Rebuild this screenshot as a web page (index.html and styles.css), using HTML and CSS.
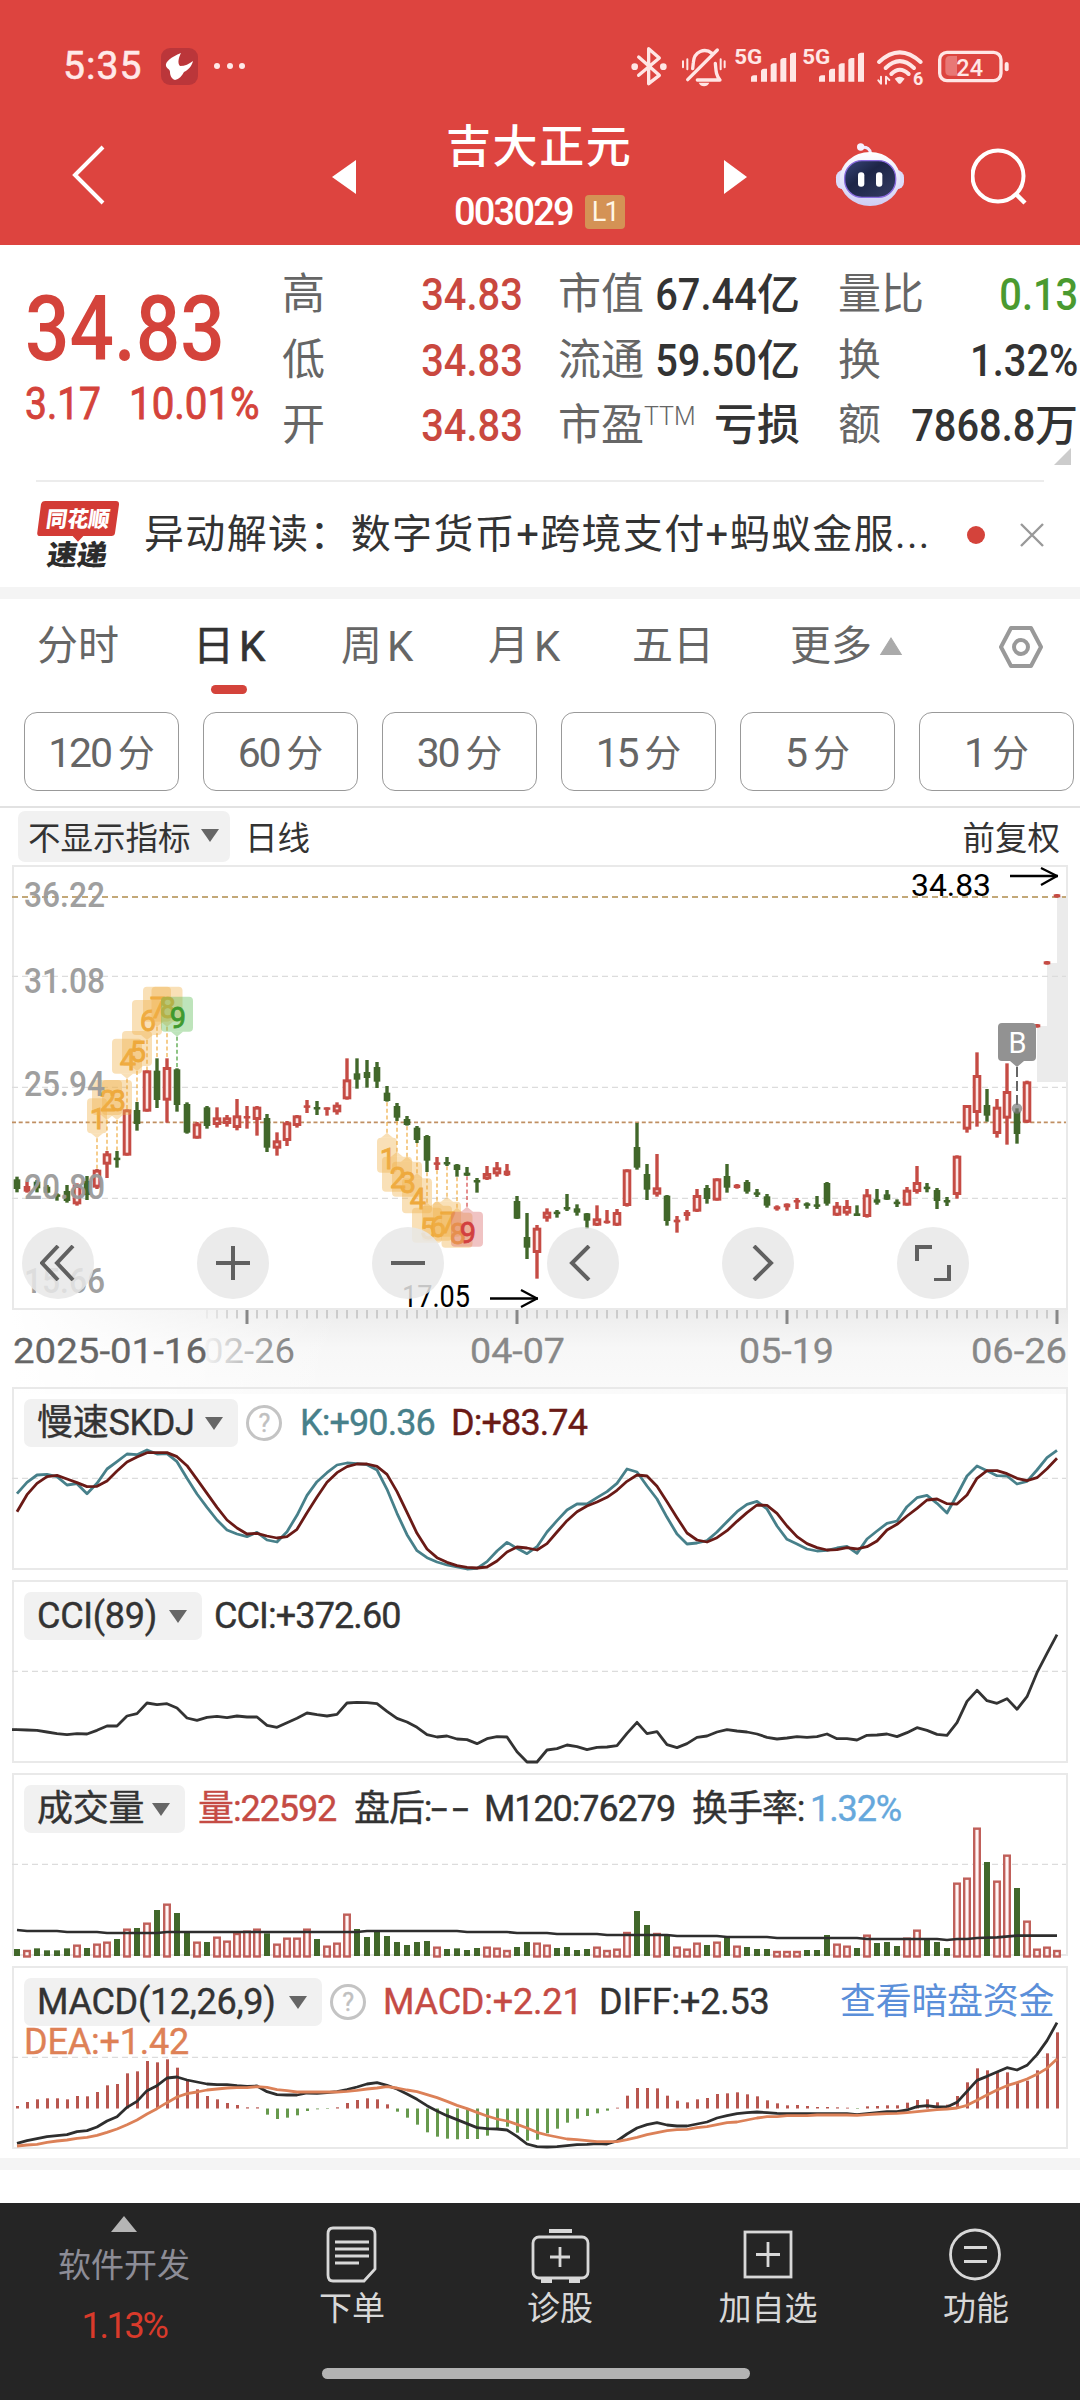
FILE: index.html
```html
<!DOCTYPE html>
<html lang="zh-CN">
<head>
<meta charset="utf-8">
<title>吉大正元 003029</title>
<link rel="stylesheet" href="styles.css">
</head>
<body>
<header class="top">
  <div class="status">
    <span class="clock">5:35</span>
    <svg class="app-icon" viewBox="0 0 37 37"><rect width="37" height="37" rx="9" fill="#bb363a"/><path d="M20 5 C10 9 4 14 5 18 C6 21 9 21 9 24 C9 28 11 31 14 32 C18 31 21 28 23 24 C27 22 31 18 32 13 C28 16 24 18 19 18 C16 15 18 9 20 5Z" fill="#fff"/></svg>
    <svg class="dots" viewBox="0 0 34 8"><g fill="#ffe9e8"><circle cx="4" cy="4" r="3"/><circle cx="17" cy="4" r="3"/><circle cx="29" cy="4" r="3"/></g></svg>
    <svg class="sys" viewBox="0 0 1260 180" fill="none" stroke="#ffe6e5" stroke-width="10" stroke-linecap="round" stroke-linejoin="round">
      <path d="M56 63 L118 118 L86 143 V38 L118 66 L56 118"/>
      <g fill="#ffe6e5" stroke="none"><circle cx="44" cy="92" r="10"/><circle cx="130" cy="92" r="10"/></g>
      <path d="M232 132 H300 C288 118 288 105 286 82 M276 52 C255 35 222 45 220 80 L218 98 M292 42 L203 131"/>
      <path d="M189 76 V94 M202 70 V100 M302 70 V100 M314 76 V94" stroke-width="6"/>
      <path d="M236 140 H268 C262 154 242 154 236 140Z" fill="#ffe6e5" stroke="none"/>
      <g fill="#ffe6e5" stroke="none">
        <text x="343" y="84" class="net" textLength="84" lengthAdjust="spacingAndGlyphs">5G</text>
        <text x="547" y="84" class="net" textLength="84" lengthAdjust="spacingAndGlyphs">5G</text>
        <path id="bars" d="M393 137 V126 Q393 118 402 118 H411 V137Z M423 137 V104 Q425 98 432 98 H441 V137Z M452 137 V87 Q455 82 461 82 H470 V137Z M481 137 V71 Q484 66 490 66 H499 V137Z M510 137 V55 Q513 50 519 50 H528 V137Z"/>
        <use href="#bars" x="204"/>
        <path d="M824 128 Q839 116 854 128 L843 142 Q839 145 835 142Z"/>
        <text x="879" y="148" class="six">6</text>
        <text x="1009" y="120" class="batt" textLength="80" lengthAdjust="spacingAndGlyphs">24</text>
      </g>
      <path d="M777 78 Q839 20 902 78 M797 96 Q839 55 882 96 M814 114 Q839 88 866 114" stroke-width="12"/>
      <path d="M783 122 V143 L775 133 M798 143 V122 L808 132" stroke-width="6"/>
      <rect x="959" y="49" width="184" height="85" rx="22"/>
      <path d="M976 75 Q976 60 990 60 H1011 V119 H990 Q976 119 976 105Z" fill="#e87876" stroke="none"/>
      <path d="M1160 84 V100" stroke-width="12"/>
    </svg>
  </div>
  <div class="nav">
    <svg class="back" viewBox="0 0 34 60"><path d="M31 2 L3 30 L31 58" fill="none" stroke="#fff" stroke-width="4"/></svg>
    <svg class="tri-l" viewBox="0 0 24 34"><path d="M24 0 V34 L0 17Z" fill="#fff"/></svg>
    <div class="title"><h1>吉大正元</h1><div class="code"><span>003029</span><i>L1</i></div></div>
    <svg class="tri-r" viewBox="0 0 24 34"><path d="M0 0 V34 L23 17Z" fill="#fff"/></svg>
    <svg class="robot" viewBox="645 320 210 200">
      <defs><linearGradient id="shell" x1="0" y1="0" x2="0" y2="1"><stop offset="0" stop-color="#fff"/><stop offset="1" stop-color="#cfcdf4"/></linearGradient>
      <linearGradient id="visor" x1="0" y1="0" x2="1" y2="1"><stop offset="0" stop-color="#39477a"/><stop offset=".4" stop-color="#1d2547"/><stop offset="1" stop-color="#343c63"/></linearGradient></defs>
      <path d="M724 339 Q750 336 752 358" fill="none" stroke="#efeaff" stroke-width="9"/><circle cx="722" cy="338" r="11" fill="#f7f1ff"/>
      <rect x="648" y="407" width="204" height="58" rx="22" fill="#dcdcfa"/>
      <ellipse cx="750" cy="434" rx="91" ry="81" fill="url(#shell)"/>
      <rect x="674" y="379" width="153" height="110" rx="52" fill="url(#visor)" stroke="#8769dd" stroke-width="4"/>
      <rect x="714" y="414" width="19" height="43" rx="9" fill="#fff"/><rect x="768" y="414" width="19" height="43" rx="9" fill="#fff"/>
    </svg>
    <svg class="search" viewBox="0 0 58 58"><circle cx="27" cy="28" r="25.5" fill="none" stroke="#fff" stroke-width="4"/><path d="M45 46 L54 55" stroke="#fff" stroke-width="4.5"/></svg>
  </div>
</header>

<section class="quote">
  <div class="price">
    <div class="last"><b>34.83</b></div>
    <div class="chg"><span>3.17</span><span>10.01%</span></div>
  </div>
  <dl class="q1">
    <dt>高</dt><dd><b>34.83</b></dd><dt>低</dt><dd><b>34.83</b></dd><dt>开</dt><dd><b>34.83</b></dd>
  </dl>
  <dl class="q2">
    <dt>市值</dt><dd><b>67.44</b>亿</dd><dt>流通</dt><dd><b>59.50</b>亿</dd><dt>市盈<sup>TTM</sup></dt><dd>亏损</dd>
  </dl>
  <dl class="q3">
    <dt>量比</dt><dd class="green"><b>0.13</b></dd><dt>换</dt><dd><b>1.32%</b></dd><dt>额</dt><dd><b>7868.8</b>万</dd>
  </dl>
  <i class="corner"></i>
</section>

<section class="news">
  <svg class="logo" viewBox="78 50 252 212">
    <path d="M106 56 H318 Q328 56 327 67 L315 152 Q314 161 304 161 H220 L204 178 L188 161 H90 Q80 161 82 150 L93 66 Q95 56 106 56Z" fill="#d33b35"/>
    <text transform="translate(106 135) skewX(-8)" class="lg1" textLength="190" lengthAdjust="spacingAndGlyphs">同花顺</text>
    <text transform="translate(108 248) skewX(-8)" class="lg2" textLength="180" lengthAdjust="spacingAndGlyphs">速递</text>
  </svg>
  <p>异动解读：数字货币+跨境支付+蚂蚁金服...</p>
  <i class="dot"></i>
  <svg class="close" viewBox="0 0 24 24"><path d="M1 1 L23 23 M23 1 L1 23" stroke="#999" stroke-width="2.4"/></svg>
</section>

<nav class="tabs">
  <span>分时</span><span class="on">日<em>K</em></span><span>周<em>K</em></span><span>月<em>K</em></span><span>五日</span><span>更多<svg viewBox="0 0 22 17"><path d="M11 1 L21 17 H1Z" fill="#aaa" stroke="#aaa"/></svg></span>
  <svg class="hex" viewBox="0 0 46 44"><path d="M13 3 H33 L43 22 L33 41 H13 L3 22Z" fill="none" stroke="#999" stroke-width="4" stroke-linejoin="round"/><circle cx="23" cy="22" r="7" fill="none" stroke="#999" stroke-width="4"/></svg>
</nav>
<div class="mins"><button><em>120</em>分</button><button><em>60</em>分</button><button><em>30</em>分</button><button><em>15</em>分</button><button><em>5</em>分</button><button><em>1</em>分</button></div>

<div class="bar"><span class="pick">不显示指标<i></i></span><span class="line">日线</span><span class="adj">前复权</span></div>

<main class="charts">
  <div class="kline">
    <svg id="k" viewBox="12 865 1056 446"></svg>
    <div class="tools">
      <button><svg viewBox="0 0 36 36"><path d="M18 1 L2 18 L18 35 M33 1 L17 18 L33 35"/></svg></button>
      <button><svg viewBox="0 0 36 36"><path d="M18 1 V35 M1 18 H35"/></svg></button>
      <button><svg viewBox="0 0 36 36"><path d="M1 18 H35"/></svg></button>
      <button><svg viewBox="0 0 36 36"><path d="M24 1 L7 18 L24 35"/></svg></button>
      <button><svg viewBox="0 0 36 36"><path d="M14 1 L31 18 L14 35"/></svg></button>
      <button><svg viewBox="0 0 36 36"><path d="M2 16 V2 H17 M34 20 V35 H19"/></svg></button>
    </div>
  </div>
  <svg id="axis" viewBox="12 1310 1056 84"></svg>
  <div class="panel skdj">
    <svg id="skdj" viewBox="12 1388 1056 182"></svg>
    <div class="head"><span class="pick">慢速SKDJ<i></i></span><span class="help">?</span><span class="teal">K:+90.36</span><span class="maroon">D:+83.74</span></div>
  </div>
  <div class="panel cci">
    <svg id="cci" viewBox="12 1581 1056 182"></svg>
    <div class="head"><span class="pick">CCI(89)<i></i></span><span>CCI:+372.60</span></div>
  </div>
  <div class="panel vol">
    <svg id="vol" viewBox="12 1774 1056 182"></svg>
    <div class="head"><span class="pick">成交量<i></i></span><span class="red">量:22592</span><span>盘后:<tt>--</tt></span><span>M120:76279</span><span>换手率:</span><span class="blue">1.32%</span></div>
  </div>
  <div class="panel macd">
    <svg id="macd" viewBox="12 1967 1056 182"></svg>
    <div class="head"><span class="pick">MACD(12,26,9)<i></i></span><span class="help">?</span><span class="red">MACD:+2.21</span><span>DIFF:+2.53</span><a>查看暗盘资金</a><span class="dea">DEA:+1.42</span></div>
  </div>
</main>
<div class="band"></div>

<footer>
  <div class="acts">
    <div class="sector"><i></i><span>软件开发</span><b>1.13%</b></div>
    <div><svg viewBox="0 0 60 60"><path d="M11 4 H47 Q53 4 53 10 V45 L42 57 H11 Q6 57 6 51 V10 Q6 4 11 4Z"/><path d="M13 18 H47 M13 25 H47 M13 32 H47 M13 39 H37"/></svg><span>下单</span></div>
    <div><svg viewBox="0 0 60 60"><rect x="3" y="13" width="55" height="41" rx="6"/><path d="M19 7 H42 M11 57 H22 M39 57 H50" stroke-width="4"/><path d="M30 23 V43 M20 33 H40"/></svg><span>诊股</span></div>
    <div><svg viewBox="0 0 60 60"><rect x="7" y="8" width="46" height="45"/><path d="M30 18 V43 M18 30.500 H42"/></svg><span>加自选</span></div>
    <div><svg viewBox="0 0 60 60"><circle cx="29" cy="30.500" r="24.500"/><path d="M18 23.500 H41 M18 37.500 H41"/></svg><span>功能</span></div>
  </div>
  <div class="home"></div>
</footer>
<script src="charts.js"></script>
</body>
</html>
```
FILE: styles.css
```css
* { box-sizing: border-box; margin: 0; padding: 0; }
body { width: 1080px; height: 2400px; overflow: hidden; background: #fff; color: #333; font-family: Roboto, "Noto Sans CJK SC", sans-serif; }
svg { display: block; flex: none; }
i, em { font-style: normal; }
button { background: none; border: 0; font: inherit; color: inherit; }

.top { height: 245px; background: #dd443f; color: #fff; }
.status { display: flex; align-items: center; height: 96px; padding: 36px 40px 0 63px; }
.clock { width: 98px; font-size: 39px; font-weight: 400; -webkit-text-stroke: .6px #ffe9e8; color: #ffe9e8; letter-spacing: 1.100px; }
.app-icon { width: 37px; height: 37px; }
.dots { width: 34px; height: 8px; margin: 0 0 0 15px; }
.sys { width: 420px; height: 60px; margin-left: auto; }
.net { font: 700 62px Roboto, sans-serif; }
.six { font: 700 54px Roboto, sans-serif; }
.batt { font: 500 74px Roboto, sans-serif; }
.nav { display: flex; align-items: flex-start; height: 149px; }
.back { width: 34px; height: 60px; margin: 49px 0 0 72px; }
.tri-l { width: 24px; height: 34px; margin: 64px 0 0 226px; }
.title { width: 220px; margin: 22px 0 0 76px; }
.title h1 { font-size: 45px; font-weight: 500; line-height: 60px; letter-spacing: 1.600px; text-indent: 14px; white-space: nowrap; }
.code { display: flex; align-items: center; margin: 15px 0 0 22px; font-size: 38px; line-height: 38px; letter-spacing: -1.800px; font-weight: 500; }
.code i { width: 40px; height: 34px; margin-left: 12px; border-radius: 4px; background: #d49255; font-size: 27px; line-height: 34px; text-align: center; font-weight: 400; color: #fff6e6; }
.tri-r { width: 24px; height: 34px; margin: 64px 0 0 72px; }
.robot { width: 70px; height: 66.700px; margin: 45px 0 0 87px; }
.search { width: 58px; height: 58px; margin: 52px 0 0 66px; }

.quote { position: relative; display: flex; height: 235px; }
.price { width: 282px; padding: 35px 0 0 25px; color: #d4433b; }
.last { height: 100px; font-size: 90px; line-height: 100px; }
.last b, .chg span, dd b { display: inline-block; transform: scaleX(.885); transform-origin: left; font-weight: 500; }
.last b { transform: scaleX(.87); }
.chg { display: flex; gap: 19px; margin-top: 1px; font-size: 44px; line-height: 44px; padding-top: 1px; }
.chg span { font-weight: 400; -webkit-text-stroke: .9px #d4433b; }
.chg span:first-child { width: 85px; }
.chg span:last-child { transform: scaleX(.915); }
dl { display: grid; grid-template-columns: auto auto; justify-content: space-between; grid-auto-rows: 65.500px; line-height: 65px; padding-top: 17px; font-size: 43px; height: 222px; white-space: nowrap; }
dt { color: #666; font-weight: 400; }
dd { text-align: right; font-weight: 500; font-size: 43px; }
dd b { margin-left: -20px; transform-origin: right; font-size: 45px; }
.q1 { width: 241px; }
.q1 dd { color: #c9483f; }
.q2 { width: 242px; margin-left: 35px; }
.q3 { width: 240px; margin-left: 38px; }
.q3 dd b { margin-left: -50px; }
dl .green { color: #4a9a30; }
sup { display: inline-block; width: 0; font-size: 25px; line-height: 24px; vertical-align: 15px; font-weight: 300; }
.corner { position: absolute; right: 9px; bottom: 15px; border-bottom: 17px solid #ccc; border-left: 17px solid transparent; }

.news { display: flex; align-items: center; height: 107px; margin: 0 36px; border-top: 2px solid #ececec; }
.logo { width: 84px; height: 70.700px; }
.lg1 { font: 900 66px "Noto Sans CJK SC"; fill: #fff; }
.lg2 { font: 900 84px "Noto Sans CJK SC"; fill: #2c2c2c; }
.news p { width: 801px; margin-left: 24px; font-size: 40px; letter-spacing: 1.350px; line-height: 56px; white-space: nowrap; }
.dot { width: 18px; height: 18px; margin-left: 22px; border-radius: 50%; background: #d4433b; }
.close { width: 24px; height: 24px; margin-left: auto; }

.tabs { display: grid; grid-template-columns: 159px 145px 147px 144px 158px 208px 46px; height: 125px; padding: 0 0 0 37px; border-top: 12px solid #f4f4f4; font-size: 41px; line-height: 95px; color: #666; font-weight: 400; }
.tabs span { position: relative; display: flex; white-space: nowrap; }
.tabs span svg { width: 24px; margin: 38px 0 0 7px; height: 18px; }
.tabs em { margin-left: 5px; font-size: 42px; }
.tabs .on { left: -3px; color: #333; -webkit-text-stroke: .6px #333; }
.tabs .on::after { content: ""; position: absolute; left: 18px; top: 86px; width: 36px; height: 9px; border-radius: 4.500px; background: #d4433b; }
.hex { width: 46px; height: 44px; margin-top: 26px; }
.mins { display: flex; gap: 24px; height: 96px; padding-left: 24px; border-bottom: 2px solid #e2e2e2; }
.mins button { flex: none; width: 155px; height: 79px; padding-bottom: 2px; border: 1.500px solid #999; border-radius: 13px; font-size: 37px; font-weight: 400; color: #666; }
.mins em { margin-right: 7px; font-size: 41px; letter-spacing: -2.200px; }

.bar { display: flex; align-items: center; height: 57px; padding: 0 20px 0 18px; font-size: 32.500px; white-space: nowrap; }
.pick { display: flex; align-items: center; justify-content: space-between; background: #f1f1f1; border-radius: 7px; color: #333; }
.pick i { flex: none; border: 9px solid transparent; border-top: 13px solid #666; border-bottom: 0; }
.bar .pick { width: 212px; height: 51px; padding: 0 11px 2px 10px; }
.line { margin: -2px 0 0 15px; }
.adj { margin: -2px 0 0 auto; }

.charts { padding-left: 12px; }
.kline { position: relative; height: 446px; width: 1056px; }
.tools { position: absolute; left: 10px; top: 362px; display: flex; gap: 103px; }
.tools button { flex: none; width: 72px; height: 72px; padding: 18px; border-radius: 50%; background: rgba(232,232,232,.85); }
.tools svg { width: 36px; height: 36px; fill: none; stroke: #606060; stroke-width: 4; }
.kline, #axis { margin-bottom: -1px; }
#axis { width: 1056px; height: 84px; }
.panel { position: relative; width: 1056px; height: 182px; margin-bottom: 11px; }
.panel.skdj { margin-top: -6px; }
.panel > svg { position: absolute; left: 0; top: 0; width: 1056px; height: 182px; overflow: visible; }
.head { position: relative; display: grid; padding: 11px 12px 0; grid-auto-rows: 48px; line-height: 48px; font-size: 36px; white-space: nowrap; align-items: center; letter-spacing: -.9px; -webkit-text-stroke: .4px; }
.head .pick { height: 48px; padding: 0 15px 0 13px; letter-spacing: -.3px; }
.skdj .head { grid-template-columns: 214px 62px 151px 160px; }
.cci .head { grid-template-columns: 190px 300px; }
.cci .pick { width: 178px; }
.vol .head { grid-template-columns: 174px 156px 130px 208px 118px 120px; letter-spacing: -1.100px; }
.vol .pick { width: 161px; }
.macd .head { grid-template-columns: 298px 61px 216px 241px 220px; letter-spacing: -.2px; }
.help { width: 36px; height: 36px; margin-left: 8px; border: 3px solid #c4c4c4; border-radius: 50%; color: #c0c0c0; font-size: 25px; line-height: 31px; text-align: center; }
.teal { color: #47808a; }
.maroon { color: #6a1a16; }
.red { color: #c54b44; }
.blue { color: #66a8dc; }
tt { display: inline-block; transform: scaleX(1.65); transform-origin: left; font-family: inherit; letter-spacing: 3px; }
.head a { color: #5b8fd9; letter-spacing: -.3px; -webkit-text-stroke: 0; }
.dea { color: #de8156; line-height: 36px; margin: -16px 0 0 0; grid-row: 2; }
.band { height: 12px; margin-top: -2px; background: #f4f4f4; }

footer { height: 197px; margin-top: 33px; background: #252525; color: #d8d8d8; }
.acts { display: grid; grid-template-columns: 248px repeat(4, 208px); height: 165px; font-size: 33px; }
.acts div { display: flex; flex-direction: column; align-items: center; padding-top: 21px; line-height: 40px; }
.acts svg { width: 60px; height: 60px; margin-bottom: 5px; fill: none; stroke: #d8d8d8; stroke-width: 2.800; }
.acts .sector { padding-top: 13px; color: #8d8d97; }
.sector i { border: 13px solid transparent; border-bottom: 16px solid #b5b5b5; border-top: 0; }
.sector span { margin-top: 14px; }
.sector b { margin-top: 20px; font-weight: 400; font-size: 36px; letter-spacing: -2.300px; color: #d93a2b; }
.home { width: 428px; height: 11px; margin-left: 322px; border-radius: 6px; background: #b3b3b3; }

.ylab { font: 500 35px Roboto; fill: #9a9a9a; }
.mark { font: 400 31px Roboto; fill: #000; }
.num { font: 400 29px Roboto; text-anchor: middle; }
.date { font: 400 35px Roboto; fill: #888; stroke: #888; stroke-width: .3; }
```
FILE: charts.js
```js
// Every series has 105 daily slots, 10px apart; heights are stored in thirds of a pixel.
const X = i => 17 + 10 * i;
const RED = '#c54b44', GREEN = '#41672a';
const rect = (x, y, w, h, a) => `<rect x="${x}" y="${y}" width="${w}" height="${h}" ${a}/>`;
const line = (x1, y1, x2, y2, a) => `<path d="M${x1} ${y1}L${x2} ${y2}" fill="none" ${a}/>`;
const grid = (y, c = '#dcdcdc', dash = '6 4', w = 1.2) => line(12, y, 1066, y, `stroke="${c}" stroke-width="${w}" stroke-dasharray="${dash}"`);
const frame = (y, h) => rect(13, y + 1, 1054, h - 2, 'fill="none" stroke="#e9e9e9" stroke-width="2"');
const text = (x, y, s, cls, w, a = '') => `<text x="${x}" y="${y}" class="${cls}" ${w ? `textLength="${w}" lengthAdjust="spacingAndGlyphs"` : ''} ${a}>${s}</text>`;
const nums = s => s.trim().split(/\s+/).map(Number);
const poly = (pts, color, w) => `<path d="M${pts.map(p => p.join(' ')).join('L')}" fill="none" stroke="${color}" stroke-width="${w}" stroke-linejoin="round"/>`;
const curve = (s, base, color, w) => poly(nums(s).map((v, i) => [X(i), base + v / 3]), color, w);
const put = (id, html) => { document.getElementById(id).innerHTML = html; };

// colour, high, low, body top, body bottom
const candles = `g 950 997 958 987;r 965 998 978 995;g 960 997 965 985;g 975 1000 980 998;g 1000 1022 1003 1008;g 975 1028 993 1023;r 970 1037 975 1033;g 948 1020 963 1005;r 927 987 929 983;r 873 954 880 914;g 873 923 893 898;r 748 887 748 887;g 726 812 750 792;r 631 755 631 755;g 595 744 632 720;r 595 788 621 722;g 625 755 628 735;g 727 821 732 818;r 786 836 790 836;g 738 806 742 798;r 742 803 772 795;r 765 800 772 792;r 717 811 766 804;r 738 806 768 773;r 738 827 740 780;g 762 876 774 863;r 817 887 841 866;r 783 858 787 843;r 765 803 766 798;r 720 759 736 742;g 723 765 741 747;r 742 767 742 748;r 727 764 734 757;r 595 719 658 718;g 595 686 640 659;g 600 683 636 654;g 606 684 621 665;g 678 725 698 723;g 729 783 738 773;g 768 797 777 795;g 798 849 803 840;g 825 936 828 902;r 891 930 907 912;g 891 918 906 912;g 912 950 914 930;g 921 948 938 947;g 954 998 960 965;r 918 960 939 958;r 906 950 922 943;r 912 948 932 946;g 1008 1077 1023 1076;g 1059 1197 1131 1163;r 1095 1256 1103 1179;r 1045 1085 1055 1076;g 1050 1073 1055 1060;g 1002 1053 1041 1046;g 1033 1067 1045 1058;g 1059 1107 1060 1082;r 1036 1098 1075 1097;r 1050 1091 1082 1089;r 1047 1098 1056 1097;r 928 1040 928 1038;g 789 929 861 923;g 912 1020 942 989;r 882 1010 982 1004;g 1005 1097 1007 1083;r 1068 1118 1079 1087;r 1050 1082 1056 1068;r 987 1056 1005 1055;g 975 1031 984 1017;r 955 1022 955 1022;g 912 998 948 983;r 972 986 974 984;g 960 1001 966 995;g 987 1011 997 1003;g 1002 1043 1009 1037;r 1036 1052 1039 1048;r 1030 1052 1031 1042;r 1014 1047 1020 1026;g 1027 1046 1030 1036;g 1008 1047 1033 1038;g 966 1037 969 1031;r 1026 1068 1037 1067;r 1020 1067 1038 1061;g 1036 1067 1060 1068;r 987 1073 1003 1071;g 987 1034 1018 1028;g 990 1020 1003 1019;g 1018 1041 1025 1032;r 981 1037 989 1037;r 918 1001 966 996;g 969 997 980 985;g 984 1047 990 1023;g 1011 1038 1020 1027;r 886 1016 887 1005;r 735 818 735 809;r 577 800 645 759;g 687 785 735 767;r 717 833 740 822;r 610 854 693 776;g 745 851 755 822;r 662 789 664 788;r 492 503 493 502;r 303 314 304 313;r 102 113 103 112`
  .split(';').map(s => { const [c, ...v] = s.split(' '); return [c, ...v.map(n => 860 + n / 3)]; });

let k = frame(865, 445) + rect(1037, 1026, 31, 56, 'fill="#ebebeb"') + rect(1047, 963, 21, 63, 'fill="#ebebeb"') + rect(1057, 896, 11, 67, 'fill="#ebebeb"');
k += grid(976.3) + grid(1087.3) + grid(1198.3) + grid(897, '#c3a878', '6 4', 1.8) + grid(1122.3, '#c08f62', '4 2.7', 1.8);
candles.forEach(([c, hi, lo, top, bot], i) => {
  const x = X(i), col = c === 'r' ? RED : GREEN;
  k += line(x, hi, x, lo, `stroke="${col}" stroke-width="3.4"`);
  k += c === 'r' && bot - top > 6
    ? rect(x - 2.8, top + 1.5, 5.6, bot - top - 3, `fill="#fbe6e4" stroke="${col}" stroke-width="3"`)
    : rect(x - 3.3, top, 6.6, Math.max(bot - top, 2.5), `fill="${col}"`);
});

// Numbered streak flags: [slot, digit, box top, points down, width]
const flags = [[8,1,715,1,20],[9,2,660,1,30],[10,3,660,1,30],[11,4,536,1,30],[12,5,513,1,30],[13,6,420,1,30],[14,7,380,1,28],[15,8,380,1,31],[16,9,410,1,32],
  [37,1,833,0,20],[38,2,890,0,30],[39,3,905,0,30],[40,4,955,0,30],[41,5,1043,0,30],[42,6,1037,0,30],[43,7,1025,0,28],[44,8,1058,0,31],[45,9,1055,0,32]];
flags.forEach(([i, d, t, up, w]) => {
  const x = X(i), y = 860 + t / 3, h = 35;
  const c = d < 9 ? ['#eea93c', '#f0b24a'] : up ? ['#3f9a2e', '#5cbb55'] : ['#d2403f', '#d96a6a'];
  const tip = up ? y + h + 5 : y - 5;
  k += rect(x - w / 2, y, w, h, `rx="4" fill="${c[1]}" opacity=".4"`);
  k += `<path d="M${x - 6} ${up ? y + h : y}H${x + 6}L${x} ${tip}Z" fill="${c[1]}" opacity=".4"/>`;
  k += line(x, tip, x, up ? candles[i][1] : candles[i][2], `stroke="${c[0]}" stroke-width="1.8" stroke-dasharray="4 2.6" opacity=".65"`);
  k += text(x + 1, y + 31, d, 'num', 0, `fill="${c[0]}" stroke="${c[0]}" stroke-width=".8"`);
});

k += '<path d="M1002 1023H1032Q1036 1023 1036 1027V1057Q1036 1061 1032 1061H1024L1017 1067L1010 1061H1002Q998 1061 998 1057V1027Q998 1023 1002 1023Z" fill="#929292"/>';
k += text(1017.5, 1053, 'B', 'num', 0, 'fill="#fff"') + line(1017, 1067, 1017, 1107, 'stroke="#666" stroke-width="2" stroke-dasharray="10 4"');
k += '<circle cx="1017" cy="1108.500" r="5.200" fill="#777" opacity=".7"/>';
[['36.22', 907], ['31.08', 993], ['25.94', 1096], ['20.80', 1199], ['15.66', 1293]].forEach(([s, y]) => { k += text(24, y, s, 'ylab', 81, 'opacity=".95"'); });
k += text(911, 896, '34.83', 'mark', 80) + poly([[1010, 876], [1058, 876]], '#000', 2.6) + poly([[1041, 868], [1057, 876], [1041, 885]], '#000', 2.2);
k += text(402, 1306.5, '17.05', 'mark', 68) + poly([[490, 1298.5], [538, 1298.5]], '#000', 2.6) + poly([[521, 1290], [537, 1298.5], [521, 1307]], '#000', 2.2);
put('k', k);

let a = '<defs><linearGradient id="dn" x1="0" y1="0" x2="0" y2="1"><stop offset="0" stop-color="#ececec"/><stop offset=".45" stop-color="#f7f7f7"/><stop offset="1" stop-color="#fafafa"/></linearGradient><linearGradient id="fade"><stop offset="0" stop-color="#fff"/><stop offset="1" stop-color="#fff" stop-opacity="0"/></linearGradient><linearGradient id="txt" gradientUnits="userSpaceOnUse" x1="205" y1="0" x2="285" y2="0"><stop offset="0" stop-color="#f4f4f4"/><stop offset="1" stop-color="#888"/></linearGradient></defs>';
a += rect(12, 1310, 1056, 84, 'fill="url(#dn)"') + rect(12, 1310, 330, 84, 'fill="url(#fade)"');
for (let i = 19; i < 105; i++) {
  const major = (i - 23) % 27 === 0, x = X(i);
  a += line(x, 1310, x, major ? 1324 : 1318.5, `stroke="${major ? '#888' : '#aaa'}" stroke-width="${major ? 3 : 1}" opacity="${i < 22 ? (i - 18) / 4 : 1}"`);
}
a += text(203, 1363, '02-26', 'date', 92, 'style="fill:url(#txt);stroke:none"') + text(470, 1363, '04-07', 'date', 95) + text(739, 1363, '05-19', 'date', 95) + text(971, 1363, '06-26', 'date', 96);
a += text(13, 1363, '2025-01-16', 'date', 194, 'style="fill:#666;stroke:#666"');
put('axis', a);

const K = '371 337 315 313 320 345 341 371 340 297 275 252 254 240 252 251 275 325 372 412 450 480 492 500 487 510 516 485 436 376 335 308 285 279 281 284 300 358 430 494 542 563 576 585 591 597 595 575 543 517 535 551 530 486 452 420 402 402 383 365 340 297 306 348 387 442 492 522 519 512 486 455 425 403 394 417 468 508 522 537 543 541 534 529 550 507 483 460 453 410 383 376 400 429 375 318 288 302 317 318 342 334 300 263 241';
const D = '425 374 340 320 316 327 338 350 349 333 303 276 261 248 248 248 260 287 328 370 412 450 474 492 490 498 504 500 478 428 381 337 308 290 282 282 289 313 365 427 490 537 563 577 587 592 594 591 573 546 531 534 540 521 486 452 425 408 396 382 361 334 315 318 349 395 443 489 510 516 503 482 454 428 405 406 430 468 500 521 533 540 539 533 537 530 513 480 463 438 415 390 387 401 402 375 325 302 302 311 325 332 323 296 265';
put('skdj', frame(1387, 183) + grid(1478.3) + curve(K, 1370, '#47808a', 2.8) + curve(D, 1370, '#6a1a16', 2.8));

const C = '1079 1080 1081 1086 1091 1094 1091 1092 1081 1068 1068 1038 1031 999 1004 1001 1014 1044 1051 1042 1039 1043 1038 1041 1041 1066 1072 1058 1045 1029 1034 1038 1033 999 997 998 1001 1024 1045 1056 1072 1094 1101 1098 1107 1109 1121 1106 1100 1101 1145 1176 1176 1140 1136 1125 1130 1139 1132 1131 1127 1090 1057 1091 1085 1124 1133 1121 1102 1098 1086 1079 1083 1086 1092 1102 1107 1104 1100 1102 1100 1092 1106 1106 1110 1096 1095 1092 1100 1088 1073 1081 1093 1096 1058 994 961 992 1000 986 1018 980 908 850 794';
put('cci', frame(1580, 183) + grid(1671.3) + line(12, 1729.6, 17, 1729.6, 'stroke="#333" stroke-width="2.8"') + curve(C, 1370, '#333', 2.8));

const V = 'g567 r570 g565 g571 g571 g565 r554 g564 r551 r545 g537 r506 g504 r488 g450 r431 g459 g516 r545 g546 r530 r542 r519 r512 r506 g520 r551 r533 r533 r506 g537 r557 r548 r461 g507 g531 g515 g528 g546 g555 g546 g543 r560 g567 g565 g570 g564 r560 r563 r570 g561 g546 r548 r554 g564 g561 g570 g567 r560 r570 r566 r516 g453 g495 r519 g525 r560 r566 r548 g555 r545 g534 r557 g561 g567 g567 r573 r573 r573 g570 g570 g525 r551 r557 g564 r524 g549 g546 g558 r533 r509 g538 g546 g564 r368 r353 r203 g306 r362 r284 g384 r482 r566 r560 r570'.split(' ');
let v = frame(1773, 183) + grid(1864.3);
V.forEach((s, i) => {
  const y = 1760 + s.slice(1) / 3, x = X(i);
  v += s[0] === 'g' ? rect(x - 3, y, 6, 1956 - y, `fill="${GREEN}"`) : rect(x - 2.8, y + 1, 5.6, 1955.5 - y, 'fill="#fff6f5" stroke="#c0605a" stroke-width="2.4"');
});
const M = [[0,510],[1,513],[4,513],[5,516],[8,516],[9,519],[14,519],[15,516],[34,516],[35,513],[44,513],[45,516],[49,516],[50,519],[53,519],[54,522],[58,522],[59,525],[65,525],[66,528],[70,528],[71,531],[75,531],[76,534],[84,534],[85,537],[92,537],[93,540],[94,537],[95,537],[96,534],[98,532],[100,527],[104,527]];
put('vol', v + poly(M.map(([i, y]) => [X(i), 1760 + y / 3]), '#2e2e2e', 2.6));

const H = nums('1038 1026 1018 1015 1015 1018 1008 1009 996 976 972 940 934 903 907 898 923 962 988 1008 1018 1029 1035 1042 1042 1064 1077 1073 1066 1053 1048 1047 1042 1029 1020 1015 1018 1033 1055 1073 1094 1117 1130 1136 1138 1137 1137 1127 1108 1100 1118 1142 1139 1120 1106 1088 1076 1068 1060 1052 1043 1007 984 984 985 1007 1022 1027 1018 1014 1002 1000 997 1003 1009 1021 1030 1036 1035 1038 1041 1041 1042 1043 1047 1039 1038 1036 1036 1028 1020 1018 1027 1034 1008 967 925 931 937 937 965 962 931 880 817');
let m = frame(1966, 183) + grid(2057.3);
H.forEach((h, i) => { m += line(X(i) + .5, 2108.5, X(i) + .5, 1760 + h / 3, `stroke="${h > 1045 ? '#67994d' : '#b8564f'}" stroke-width="3"`); });
const F = '1150 1142 1136 1130 1127 1124 1115 1112 1101 1083 1070 1042 1024 992 977 954 951 960 966 972 974 974 977 979 978 995 1004 1005 1005 999 1000 998 995 989 981 972 968 976 987 1002 1018 1037 1053 1067 1079 1091 1103 1106 1107 1110 1129 1152 1160 1161 1160 1157 1154 1153 1151 1152 1143 1122 1104 1094 1088 1095 1098 1098 1092 1086 1074 1067 1061 1058 1056 1058 1060 1061 1061 1061 1061 1061 1061 1061 1064 1061 1058 1055 1055 1050 1040 1037 1041 1041 1027 994 961 949 936 923 930 916 884 842 788';
const E = '1158 1155 1153 1147 1143 1140 1135 1132 1126 1117 1107 1094 1080 1062 1046 1028 1011 1001 996 990 987 984 983 983 980 982 989 992 996 996 996 996 996 994 991 987 984 980 984 990 995 1004 1013 1024 1036 1046 1057 1068 1077 1083 1093 1104 1117 1125 1131 1137 1139 1142 1145 1145 1145 1139 1132 1124 1118 1112 1109 1108 1103 1100 1094 1088 1086 1080 1074 1070 1070 1067 1067 1067 1065 1065 1065 1065 1066 1064 1062 1061 1060 1058 1055 1052 1049 1047 1044 1036 1021 1005 990 977 968 957 943 925 897';
put('macd', m + curve(F, 1760, '#2e2e2e', 2.8) + curve(E, 1760, '#dc8158', 2.8));
```
